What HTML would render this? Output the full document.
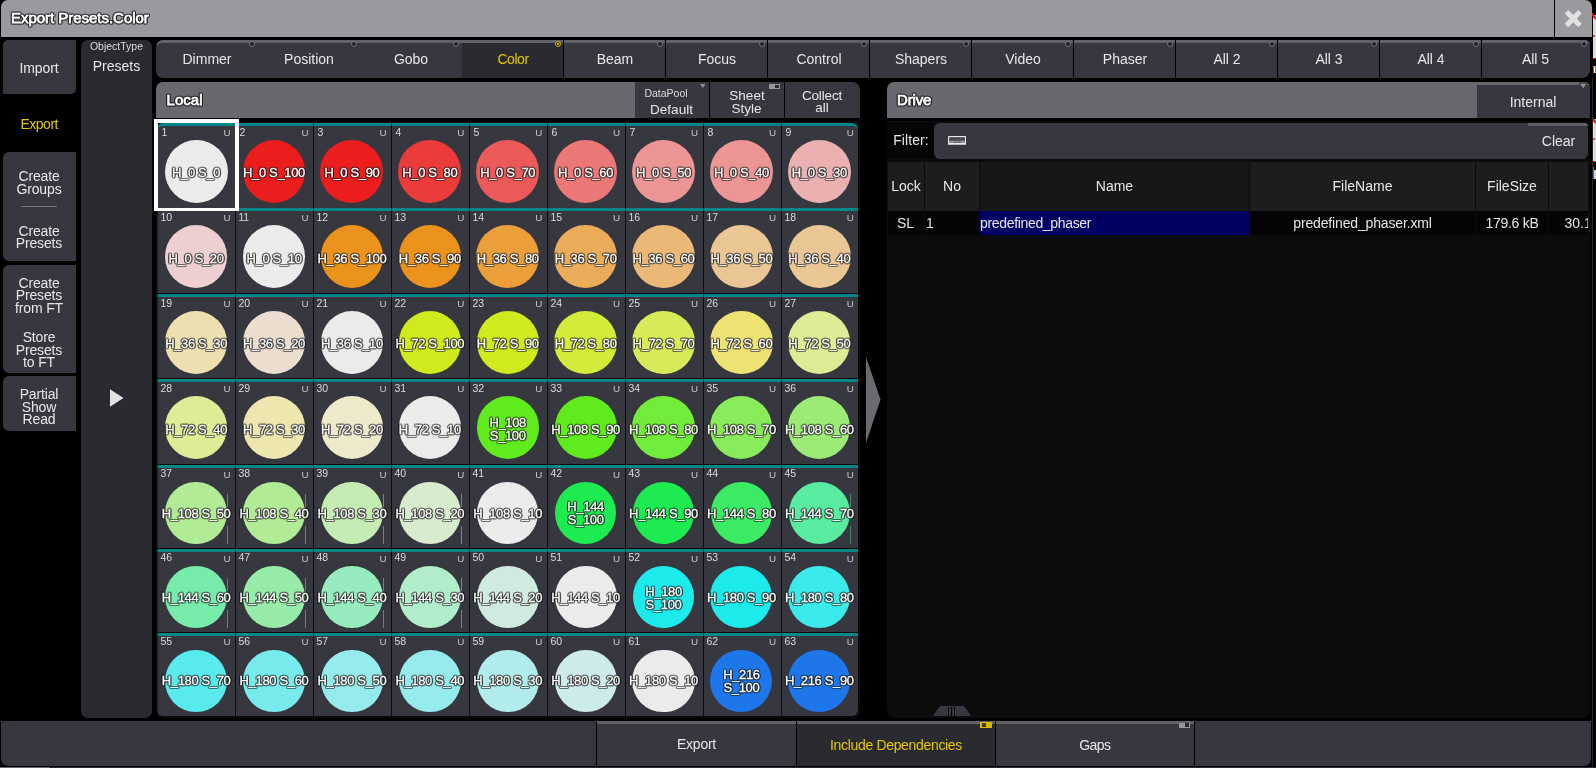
<!DOCTYPE html>
<html><head><meta charset="utf-8"><title>Export Presets.Color</title><style>
*{box-sizing:border-box;margin:0;padding:0}
html,body{width:1596px;height:768px;overflow:hidden;background:#000;}
body{font-family:"Liberation Sans", sans-serif;font-size:14px;color:#e8e8e8;position:relative;line-height:1}
#root{position:absolute;left:0;top:0;width:1596px;height:768px;overflow:hidden;opacity:0.999;will-change:transform}
.a{position:absolute}
.c{position:absolute;text-align:center;white-space:nowrap}
.ol{font-weight:normal !important;-webkit-text-stroke:0.75px #fff;filter:drop-shadow(1px 0 0 rgba(25,25,25,.7)) drop-shadow(-1px 0 0 rgba(25,25,25,.7)) drop-shadow(0 1px 0 rgba(25,25,25,.7)) drop-shadow(0 -1px 0 rgba(25,25,25,.7));}
.cell{position:absolute;background:#383840;overflow:hidden}
.circ{position:absolute;width:62.6px;height:62.6px;border-radius:50%}
.num{position:absolute;font-size:10.5px;color:#dcdcdc;left:5px;}
.u{position:absolute;font-size:9.8px;color:#c8c8c8;}
.lbl{position:absolute;left:-10px;right:-10px;text-align:center;font-size:13px;color:#fff;white-space:nowrap;letter-spacing:-0.35px;
 -webkit-text-stroke:0.32px #fff;filter:drop-shadow(1px 0 0 rgba(20,20,20,.58)) drop-shadow(-1px 0 0 rgba(20,20,20,.58)) drop-shadow(0 1px 0 rgba(20,20,20,.58)) drop-shadow(0 -1px 0 rgba(20,20,20,.58));}
.tab{position:absolute;top:40px;height:38px;background:#383840;border-top:3px solid #626369;text-align:center;line-height:33px;font-size:14px}
.dot{position:absolute;width:6px;height:6px;border-radius:50%;background:#222228;border:1px solid #77787e;top:41px}
.sb{position:absolute;left:3px;width:73px;background:#383840;text-align:center;font-size:14px;letter-spacing:-0.15px}
.sb div{position:absolute;left:-1px;right:0;text-align:center;line-height:12.5px}
</style></head><body><div id="root">
<div class="a" style="left:1593px;top:15px;width:3px;height:43px;background:#dedede;"></div>
<div class="a" style="left:1593px;top:58px;width:3px;height:1px;background:#e01818;"></div>
<div class="a" style="left:1593px;top:35px;width:2px;height:2px;background:#e01818;border-radius:1px"></div>
<div class="a" style="left:1593px;top:119px;width:3px;height:42px;background:#dedede;"></div>
<div class="a" style="left:1593px;top:161px;width:3px;height:1px;background:#e01818;"></div>
<div class="a" style="left:1593px;top:138px;width:2px;height:2px;background:#e01818;border-radius:1px"></div>
<svg class="a" style="left:1592px;top:12px" width="4" height="9"><path d="M0 1.5 L4 7" stroke="#e01818" stroke-width="2.2" fill="none"/></svg>
<svg class="a" style="left:1592px;top:116px" width="4" height="9"><path d="M0 1.5 L4 7" stroke="#e01818" stroke-width="2.2" fill="none"/></svg>
<div class="a" style="left:1593px;top:66px;width:1px;height:7px;background:#3a6ad0;"></div>
<div class="a" style="left:1594px;top:66px;width:1px;height:7px;background:#e8e8e8;"></div>
<div class="a" style="left:1595px;top:66px;width:1px;height:7px;background:#c06a20;"></div>
<div class="a" style="left:1593px;top:167px;width:1px;height:12px;background:#a06020;"></div>
<div class="a" style="left:1594px;top:170px;width:2px;height:9px;background:#c8d0e8;"></div>
<div class="a" style="left:1592px;top:78px;width:1px;height:690px;background:#262626;"></div>
<div class="a" style="left:1px;top:0px;width:1553px;height:37px;background:#9a9a9f;border-radius:7px 0 0 0"></div>
<div class="a" style="left:1555px;top:0px;width:37px;height:37px;background:#9a9a9f;border-radius:0 7px 0 0"></div>
<div class="a ol" style="left:11px;top:8px;font-size:15px;font-weight:bold;color:#fff;letter-spacing:-0.03px;line-height:20px;white-space:nowrap">Export Presets.Color</div>
<svg class="a" style="left:1563px;top:8px" width="22" height="22" viewBox="0 0 22 22"><path d="M1.7 5.4 L5.2 1.9 L10.2 6.9 L15.2 1.9 L18.7 5.4 L13.7 10.6 L18.7 15.8 L15.2 19.3 L10.2 14.3 L5.2 19.3 L1.7 15.8 L6.7 10.6 Z" fill="#e2e2e2"/></svg>
<div class="sb" style="top:40px;height:54px;border-radius:5px 0 5px 0"><div style="top:22px">Import</div></div>
<div class="c" style="left:-110.8px;width:300px;top:109.5px;height:28px;line-height:28px;font-size:14px;color:#e6c800;letter-spacing:-0.5px">Export</div>
<div class="sb" style="top:152px;height:109px;border-radius:6px 0 0 6px"><div style="top:18px">Create<br>Groups</div><div class="a" style="left:18px;top:54px;width:36px;height:1px;background:#77787e"></div><div style="top:72.5px">Create<br>Presets</div></div>
<div class="sb" style="top:265px;height:108px;border-radius:6px 0 0 6px"><div style="top:11.5px">Create<br>Presets<br>from FT</div><div style="top:66px">Store<br>Presets<br>to FT</div></div>
<div class="sb" style="top:376px;height:55px;border-radius:6px 0 0 6px"><div style="top:12px">Partial<br>Show<br>Read</div></div>
<div class="a" style="left:81px;top:40px;width:71px;height:678px;background:#2b2b32;border-radius:7px"></div>
<div class="c" style="left:-33.5px;width:300px;top:36.0px;height:21.0px;line-height:21.0px;font-size:10.5px;color:#dcdcdc;">ObjectType</div>
<div class="c" style="left:-33.5px;width:300px;top:51.5px;height:28px;line-height:28px;font-size:14px;color:#e8e8e8;">Presets</div>
<svg class="a" style="left:109px;top:388px" width="16" height="20"><path d="M1 1.3 L14.5 10 L1 18.7 Z" fill="#e4e4e4"/></svg>
<div class="a" style="left:156px;top:40px;width:1434px;height:38px;background:#383840;border-radius:7px 5px 8px 7px;border-top:3px solid #626369"></div>
<div class="c" style="left:57.0px;width:300px;top:44.5px;height:28px;line-height:28px;font-size:14px;color:#e8e8e8;">Dimmer</div>
<div class="dot" style="left:248.9px"></div>
<div class="c" style="left:159.0px;width:300px;top:44.5px;height:28px;line-height:28px;font-size:14px;color:#e8e8e8;">Position</div>
<div class="dot" style="left:350.9px"></div>
<div class="c" style="left:261.0px;width:300px;top:44.5px;height:28px;line-height:28px;font-size:14px;color:#e8e8e8;">Gobo</div>
<div class="dot" style="left:452.9px"></div>
<div class="a" style="left:462px;top:40px;width:101px;height:38px;background:#2b2b32;border-top:3px solid #626369"></div>
<div class="c" style="left:363.0px;width:300px;top:44.5px;height:28px;line-height:28px;font-size:14px;color:#e6c800;letter-spacing:-0.45px">Color</div>
<div class="a" style="left:563px;top:40px;width:1px;height:38px;background:#000;"></div>
<div class="dot" style="left:554.6px;top:40.8px;width:6.6px;height:6.6px;background:#3a3200;border:1.3px solid #c8ae00;"></div><div class="a" style="left:556.9px;top:43px;width:2.2px;height:2.2px;border-radius:50%;background:#e6c800"></div>
<div class="c" style="left:465.0px;width:300px;top:44.5px;height:28px;line-height:28px;font-size:14px;color:#e8e8e8;">Beam</div>
<div class="a" style="left:665px;top:40px;width:1px;height:38px;background:#000;"></div>
<div class="dot" style="left:656.9px"></div>
<div class="c" style="left:567.0px;width:300px;top:44.5px;height:28px;line-height:28px;font-size:14px;color:#e8e8e8;">Focus</div>
<div class="a" style="left:767px;top:40px;width:1px;height:38px;background:#000;"></div>
<div class="dot" style="left:758.9px"></div>
<div class="c" style="left:669.0px;width:300px;top:44.5px;height:28px;line-height:28px;font-size:14px;color:#e8e8e8;">Control</div>
<div class="a" style="left:869px;top:40px;width:1px;height:38px;background:#000;"></div>
<div class="dot" style="left:860.9px"></div>
<div class="c" style="left:771.0px;width:300px;top:44.5px;height:28px;line-height:28px;font-size:14px;color:#e8e8e8;">Shapers</div>
<div class="a" style="left:971px;top:40px;width:1px;height:38px;background:#000;"></div>
<div class="dot" style="left:962.9px"></div>
<div class="c" style="left:873.0px;width:300px;top:44.5px;height:28px;line-height:28px;font-size:14px;color:#e8e8e8;">Video</div>
<div class="a" style="left:1073px;top:40px;width:1px;height:38px;background:#000;"></div>
<div class="dot" style="left:1064.9px"></div>
<div class="c" style="left:975.0px;width:300px;top:44.5px;height:28px;line-height:28px;font-size:14px;color:#e8e8e8;">Phaser</div>
<div class="a" style="left:1175px;top:40px;width:1px;height:38px;background:#000;"></div>
<div class="dot" style="left:1166.9px"></div>
<div class="c" style="left:1077.0px;width:300px;top:44.5px;height:28px;line-height:28px;font-size:14px;color:#e8e8e8;">All 2</div>
<div class="a" style="left:1277px;top:40px;width:1px;height:38px;background:#000;"></div>
<div class="dot" style="left:1268.9px"></div>
<div class="c" style="left:1179.0px;width:300px;top:44.5px;height:28px;line-height:28px;font-size:14px;color:#e8e8e8;">All 3</div>
<div class="a" style="left:1379px;top:40px;width:1px;height:38px;background:#000;"></div>
<div class="dot" style="left:1370.9px"></div>
<div class="c" style="left:1281.0px;width:300px;top:44.5px;height:28px;line-height:28px;font-size:14px;color:#e8e8e8;">All 4</div>
<div class="a" style="left:1481px;top:40px;width:1px;height:38px;background:#000;"></div>
<div class="dot" style="left:1472.9px"></div>
<div class="c" style="left:1385.5px;width:300px;top:44.5px;height:28px;line-height:28px;font-size:14px;color:#e8e8e8;">All 5</div>
<div class="dot" style="left:1580.8px"></div>
<div class="a" style="left:156px;top:82px;width:479px;height:36px;background:#696a70;border-radius:7px 0 0 0"></div>
<div class="a ol" style="left:166.5px;top:90px;font-size:15px;font-weight:bold;color:#fff;letter-spacing:0.05px;line-height:20px">Local</div>
<div class="a" style="left:635px;top:82px;width:74px;height:36px;background:#383840;"></div>
<div class="a" style="left:710px;top:82px;width:74px;height:36px;background:#383840;"></div>
<div class="a" style="left:785px;top:82px;width:75px;height:36px;background:#383840;border-radius:0 8px 0 0"></div>
<div class="c" style="left:516.0px;width:300px;top:82.5px;height:21.0px;line-height:21.0px;font-size:10.5px;color:#dcdcdc;">DataPool</div>
<div class="c" style="left:521.5px;width:300px;top:95.5px;height:27.0px;line-height:27.0px;font-size:13.5px;color:#e8e8e8;">Default</div>
<svg class="a" style="left:698px;top:82px" width="11" height="9"><path d="M1.0 1.4 L8.4 1.4 L4.7 6.9 Z" fill="#8c8c92" stroke="#2e2e34" stroke-width="0.8"/></svg>
<div class="c" style="left:597.0px;width:300px;top:82.0px;height:27.0px;line-height:27.0px;font-size:13.5px;color:#e8e8e8;">Sheet</div>
<div class="c" style="left:596.5px;width:300px;top:94.5px;height:27.0px;line-height:27.0px;font-size:13.5px;color:#e8e8e8;">Style</div>
<div class="a" style="left:769px;top:84px;width:11px;height:5px;background:#98989c"><div class="a" style="left:6.3px;top:1.1px;width:3.7px;height:2.7px;background:#2a2a30"></div></div>
<div class="c" style="left:672.0px;width:300px;top:81.5px;height:27.0px;line-height:27.0px;font-size:13.5px;color:#e8e8e8;letter-spacing:-0.15px">Collect</div>
<div class="c" style="left:672.0px;width:300px;top:94.0px;height:27.0px;line-height:27.0px;font-size:13.5px;color:#e8e8e8;">all</div>
<div class="a" style="left:156px;top:121px;width:704px;height:597px;background:#0c0c0e;border-radius:0 0 6px 6px"></div>
<div class="cell" style="left:157px;top:123px;width:78px;height:85px;border-top:3px solid #008787;border-radius:6px 0 0 0;"><div class="circ" style="left:7.65px;top:13.70px;width:62.9px;height:63.4px;background:#ececec"></div><div class="num" style="top:-0.5px;left:4.5px;line-height:12px;letter-spacing:-0.2px">1</div><div class="u" style="left:66.6px;top:1.8px;line-height:10px">U</div><div class="lbl" style="top:39.1px;line-height:16px;left:-20.9px;right:auto;width:120px">H_0 S_0</div></div>
<div class="cell" style="left:236px;top:123px;width:77px;height:85px;border-top:3px solid #008787;"><div class="circ" style="left:6.55px;top:13.70px;width:62.9px;height:63.4px;background:#ec1e1e"></div><div class="num" style="top:-0.5px;left:3.5px;line-height:12px;letter-spacing:-0.2px">2</div><div class="u" style="left:65.5px;top:1.8px;line-height:10px">U</div><div class="lbl" style="top:39.1px;line-height:16px;left:-22.0px;right:auto;width:120px">H_0 S_100</div></div>
<div class="cell" style="left:314px;top:123px;width:77px;height:85px;border-top:3px solid #008787;"><div class="circ" style="left:6.45px;top:13.70px;width:62.9px;height:63.4px;background:#ec1e1e"></div><div class="num" style="top:-0.5px;left:3.5px;line-height:12px;letter-spacing:-0.2px">3</div><div class="u" style="left:65.4px;top:1.8px;line-height:10px">U</div><div class="lbl" style="top:39.1px;line-height:16px;left:-22.1px;right:auto;width:120px">H_0 S_90</div></div>
<div class="cell" style="left:392px;top:123px;width:77px;height:85px;border-top:3px solid #008787;"><div class="circ" style="left:6.35px;top:13.70px;width:62.9px;height:63.4px;background:#ec3c3c"></div><div class="num" style="top:-0.5px;left:3.5px;line-height:12px;letter-spacing:-0.2px">4</div><div class="u" style="left:65.3px;top:1.8px;line-height:10px">U</div><div class="lbl" style="top:39.1px;line-height:16px;left:-22.200000000000003px;right:auto;width:120px">H_0 S_80</div></div>
<div class="cell" style="left:470px;top:123px;width:77px;height:85px;border-top:3px solid #008787;"><div class="circ" style="left:6.25px;top:13.70px;width:62.9px;height:63.4px;background:#ec5a5a"></div><div class="num" style="top:-0.5px;left:3.5px;line-height:12px;letter-spacing:-0.2px">5</div><div class="u" style="left:65.2px;top:1.8px;line-height:10px">U</div><div class="lbl" style="top:39.1px;line-height:16px;left:-22.299999999999997px;right:auto;width:120px">H_0 S_70</div></div>
<div class="cell" style="left:548px;top:123px;width:77px;height:85px;border-top:3px solid #008787;"><div class="circ" style="left:6.15px;top:13.70px;width:62.9px;height:63.4px;background:#ec7878"></div><div class="num" style="top:-0.5px;left:3.5px;line-height:12px;letter-spacing:-0.2px">6</div><div class="u" style="left:65.1px;top:1.8px;line-height:10px">U</div><div class="lbl" style="top:39.1px;line-height:16px;left:-22.4px;right:auto;width:120px">H_0 S_60</div></div>
<div class="cell" style="left:626px;top:123px;width:77px;height:85px;border-top:3px solid #008787;"><div class="circ" style="left:6.05px;top:13.70px;width:62.9px;height:63.4px;background:#ec9696"></div><div class="num" style="top:-0.5px;left:3.5px;line-height:12px;letter-spacing:-0.2px">7</div><div class="u" style="left:65.0px;top:1.8px;line-height:10px">U</div><div class="lbl" style="top:39.1px;line-height:16px;left:-22.5px;right:auto;width:120px">H_0 S_50</div></div>
<div class="cell" style="left:704px;top:123px;width:77px;height:85px;border-top:3px solid #008787;"><div class="circ" style="left:5.95px;top:13.70px;width:62.9px;height:63.4px;background:#ec9696"></div><div class="num" style="top:-0.5px;left:3.5px;line-height:12px;letter-spacing:-0.2px">8</div><div class="u" style="left:64.9px;top:1.8px;line-height:10px">U</div><div class="lbl" style="top:39.1px;line-height:16px;left:-22.6px;right:auto;width:120px">H_0 S_40</div></div>
<div class="cell" style="left:782px;top:123px;width:76px;height:85px;border-top:3px solid #008787;border-radius:0 6px 0 0;"><div class="circ" style="left:5.85px;top:13.70px;width:62.9px;height:63.4px;background:#ecb2b2"></div><div class="num" style="top:-0.5px;left:3.5px;line-height:12px;letter-spacing:-0.2px">9</div><div class="u" style="left:64.8px;top:1.8px;line-height:10px">U</div><div class="lbl" style="top:39.1px;line-height:16px;left:-22.700000000000003px;right:auto;width:120px">H_0 S_30</div></div>
<div class="cell" style="left:157px;top:208px;width:78px;height:85px;border-top:3px solid #008787;"><div class="circ" style="left:7.85px;top:14.20px;width:62.5px;height:63px;background:#eed0d2"></div><div class="num" style="top:0.0px;left:3.5px;line-height:12px;letter-spacing:-0.2px">10</div><div class="u" style="left:66.6px;top:2.1px;line-height:10px">U</div><div class="lbl" style="top:39.5px;line-height:16px;left:-20.9px;right:auto;width:120px">H_0 S_20</div></div>
<div class="cell" style="left:236px;top:208px;width:77px;height:85px;border-top:3px solid #008787;"><div class="circ" style="left:6.75px;top:14.20px;width:62.5px;height:63px;background:#ececec"></div><div class="num" style="top:0.0px;left:2.5px;line-height:12px;letter-spacing:-0.2px">11</div><div class="u" style="left:65.5px;top:2.1px;line-height:10px">U</div><div class="lbl" style="top:39.5px;line-height:16px;left:-22.0px;right:auto;width:120px">H_0 S_10</div></div>
<div class="cell" style="left:314px;top:208px;width:77px;height:85px;border-top:3px solid #008787;"><div class="circ" style="left:6.65px;top:14.20px;width:62.5px;height:63px;background:#ec931e"></div><div class="num" style="top:0.0px;left:2.5px;line-height:12px;letter-spacing:-0.2px">12</div><div class="u" style="left:65.4px;top:2.1px;line-height:10px">U</div><div class="lbl" style="top:39.5px;line-height:16px;left:-22.1px;right:auto;width:120px">H_36 S_100</div></div>
<div class="cell" style="left:392px;top:208px;width:77px;height:85px;border-top:3px solid #008787;"><div class="circ" style="left:6.55px;top:14.20px;width:62.5px;height:63px;background:#ec931e"></div><div class="num" style="top:0.0px;left:2.5px;line-height:12px;letter-spacing:-0.2px">13</div><div class="u" style="left:65.3px;top:2.1px;line-height:10px">U</div><div class="lbl" style="top:39.5px;line-height:16px;left:-22.200000000000003px;right:auto;width:120px">H_36 S_90</div></div>
<div class="cell" style="left:470px;top:208px;width:77px;height:85px;border-top:3px solid #008787;"><div class="circ" style="left:6.45px;top:14.20px;width:62.5px;height:63px;background:#eca03c"></div><div class="num" style="top:0.0px;left:2.5px;line-height:12px;letter-spacing:-0.2px">14</div><div class="u" style="left:65.2px;top:2.1px;line-height:10px">U</div><div class="lbl" style="top:39.5px;line-height:16px;left:-22.299999999999997px;right:auto;width:120px">H_36 S_80</div></div>
<div class="cell" style="left:548px;top:208px;width:77px;height:85px;border-top:3px solid #008787;"><div class="circ" style="left:6.35px;top:14.20px;width:62.5px;height:63px;background:#ecad5a"></div><div class="num" style="top:0.0px;left:2.5px;line-height:12px;letter-spacing:-0.2px">15</div><div class="u" style="left:65.1px;top:2.1px;line-height:10px">U</div><div class="lbl" style="top:39.5px;line-height:16px;left:-22.4px;right:auto;width:120px">H_36 S_70</div></div>
<div class="cell" style="left:626px;top:208px;width:77px;height:85px;border-top:3px solid #008787;"><div class="circ" style="left:6.25px;top:14.20px;width:62.5px;height:63px;background:#ecba78"></div><div class="num" style="top:0.0px;left:2.5px;line-height:12px;letter-spacing:-0.2px">16</div><div class="u" style="left:65.0px;top:2.1px;line-height:10px">U</div><div class="lbl" style="top:39.5px;line-height:16px;left:-22.5px;right:auto;width:120px">H_36 S_60</div></div>
<div class="cell" style="left:704px;top:208px;width:77px;height:85px;border-top:3px solid #008787;"><div class="circ" style="left:6.15px;top:14.20px;width:62.5px;height:63px;background:#ecc796"></div><div class="num" style="top:0.0px;left:2.5px;line-height:12px;letter-spacing:-0.2px">17</div><div class="u" style="left:64.9px;top:2.1px;line-height:10px">U</div><div class="lbl" style="top:39.5px;line-height:16px;left:-22.6px;right:auto;width:120px">H_36 S_50</div></div>
<div class="cell" style="left:782px;top:208px;width:76px;height:85px;border-top:3px solid #008787;"><div class="circ" style="left:6.05px;top:14.20px;width:62.5px;height:63px;background:#ecc796"></div><div class="num" style="top:0.0px;left:2.5px;line-height:12px;letter-spacing:-0.2px">18</div><div class="u" style="left:64.8px;top:2.1px;line-height:10px">U</div><div class="lbl" style="top:39.5px;line-height:16px;left:-22.700000000000003px;right:auto;width:120px">H_36 S_40</div></div>
<div class="cell" style="left:157px;top:294px;width:78px;height:84px;border-top:3px solid #008787;"><div class="circ" style="left:7.95px;top:14.00px;width:62.3px;height:62.8px;background:#eee0b0"></div><div class="num" style="top:0.0px;left:3.5px;line-height:12px;letter-spacing:-0.2px">19</div><div class="u" style="left:66.6px;top:2.1px;line-height:10px">U</div><div class="lbl" style="top:38.9px;line-height:16px;left:-20.9px;right:auto;width:120px">H_36 S_30</div></div>
<div class="cell" style="left:236px;top:294px;width:77px;height:84px;border-top:3px solid #008787;"><div class="circ" style="left:6.85px;top:14.00px;width:62.3px;height:62.8px;background:#eddfd0"></div><div class="num" style="top:0.0px;left:2.5px;line-height:12px;letter-spacing:-0.2px">20</div><div class="u" style="left:65.5px;top:2.1px;line-height:10px">U</div><div class="lbl" style="top:38.9px;line-height:16px;left:-22.0px;right:auto;width:120px">H_36 S_20</div></div>
<div class="cell" style="left:314px;top:294px;width:77px;height:84px;border-top:3px solid #008787;"><div class="circ" style="left:6.75px;top:14.00px;width:62.3px;height:62.8px;background:#ececec"></div><div class="num" style="top:0.0px;left:2.5px;line-height:12px;letter-spacing:-0.2px">21</div><div class="u" style="left:65.4px;top:2.1px;line-height:10px">U</div><div class="lbl" style="top:38.9px;line-height:16px;left:-22.1px;right:auto;width:120px">H_36 S_10</div></div>
<div class="cell" style="left:392px;top:294px;width:77px;height:84px;border-top:3px solid #008787;"><div class="circ" style="left:6.65px;top:14.00px;width:62.3px;height:62.8px;background:#d0ec1e"></div><div class="num" style="top:0.0px;left:2.5px;line-height:12px;letter-spacing:-0.2px">22</div><div class="u" style="left:65.3px;top:2.1px;line-height:10px">U</div><div class="lbl" style="top:38.9px;line-height:16px;left:-22.200000000000003px;right:auto;width:120px">H_72 S_100</div></div>
<div class="cell" style="left:470px;top:294px;width:77px;height:84px;border-top:3px solid #008787;"><div class="circ" style="left:6.55px;top:14.00px;width:62.3px;height:62.8px;background:#d0ec1e"></div><div class="num" style="top:0.0px;left:2.5px;line-height:12px;letter-spacing:-0.2px">23</div><div class="u" style="left:65.2px;top:2.1px;line-height:10px">U</div><div class="lbl" style="top:38.9px;line-height:16px;left:-22.299999999999997px;right:auto;width:120px">H_72 S_90</div></div>
<div class="cell" style="left:548px;top:294px;width:77px;height:84px;border-top:3px solid #008787;"><div class="circ" style="left:6.45px;top:14.00px;width:62.3px;height:62.8px;background:#d4ec3c"></div><div class="num" style="top:0.0px;left:2.5px;line-height:12px;letter-spacing:-0.2px">24</div><div class="u" style="left:65.1px;top:2.1px;line-height:10px">U</div><div class="lbl" style="top:38.9px;line-height:16px;left:-22.4px;right:auto;width:120px">H_72 S_80</div></div>
<div class="cell" style="left:626px;top:294px;width:77px;height:84px;border-top:3px solid #008787;"><div class="circ" style="left:6.35px;top:14.00px;width:62.3px;height:62.8px;background:#d8ec5a"></div><div class="num" style="top:0.0px;left:2.5px;line-height:12px;letter-spacing:-0.2px">25</div><div class="u" style="left:65.0px;top:2.1px;line-height:10px">U</div><div class="lbl" style="top:38.9px;line-height:16px;left:-22.5px;right:auto;width:120px">H_72 S_70</div></div>
<div class="cell" style="left:704px;top:294px;width:77px;height:84px;border-top:3px solid #008787;"><div class="circ" style="left:6.25px;top:14.00px;width:62.3px;height:62.8px;background:#eee474"></div><div class="num" style="top:0.0px;left:2.5px;line-height:12px;letter-spacing:-0.2px">26</div><div class="u" style="left:64.9px;top:2.1px;line-height:10px">U</div><div class="lbl" style="top:38.9px;line-height:16px;left:-22.6px;right:auto;width:120px">H_72 S_60</div></div>
<div class="cell" style="left:782px;top:294px;width:76px;height:84px;border-top:3px solid #008787;"><div class="circ" style="left:6.15px;top:14.00px;width:62.3px;height:62.8px;background:#e0ec96"></div><div class="num" style="top:0.0px;left:2.5px;line-height:12px;letter-spacing:-0.2px">27</div><div class="u" style="left:64.8px;top:2.1px;line-height:10px">U</div><div class="lbl" style="top:38.9px;line-height:16px;left:-22.700000000000003px;right:auto;width:120px">H_72 S_50</div></div>
<div class="cell" style="left:157px;top:379px;width:78px;height:85px;border-top:3px solid #008787;"><div class="circ" style="left:8.05px;top:14.40px;width:62.1px;height:62.6px;background:#e0ec96"></div><div class="num" style="top:0.0px;left:3.5px;line-height:12px;letter-spacing:-0.2px">28</div><div class="u" style="left:66.6px;top:2.1px;line-height:10px">U</div><div class="lbl" style="top:39.8px;line-height:16px;left:-20.9px;right:auto;width:120px">H_72 S_40</div></div>
<div class="cell" style="left:236px;top:379px;width:77px;height:85px;border-top:3px solid #008787;"><div class="circ" style="left:6.95px;top:14.40px;width:62.1px;height:62.6px;background:#eee8b0"></div><div class="num" style="top:0.0px;left:2.5px;line-height:12px;letter-spacing:-0.2px">29</div><div class="u" style="left:65.5px;top:2.1px;line-height:10px">U</div><div class="lbl" style="top:39.8px;line-height:16px;left:-22.0px;right:auto;width:120px">H_72 S_30</div></div>
<div class="cell" style="left:314px;top:379px;width:77px;height:85px;border-top:3px solid #008787;"><div class="circ" style="left:6.85px;top:14.40px;width:62.1px;height:62.6px;background:#eeeacc"></div><div class="num" style="top:0.0px;left:2.5px;line-height:12px;letter-spacing:-0.2px">30</div><div class="u" style="left:65.4px;top:2.1px;line-height:10px">U</div><div class="lbl" style="top:39.8px;line-height:16px;left:-22.1px;right:auto;width:120px">H_72 S_20</div></div>
<div class="cell" style="left:392px;top:379px;width:77px;height:85px;border-top:3px solid #008787;"><div class="circ" style="left:6.75px;top:14.40px;width:62.1px;height:62.6px;background:#ececec"></div><div class="num" style="top:0.0px;left:2.5px;line-height:12px;letter-spacing:-0.2px">31</div><div class="u" style="left:65.3px;top:2.1px;line-height:10px">U</div><div class="lbl" style="top:39.8px;line-height:16px;left:-22.200000000000003px;right:auto;width:120px">H_72 S_10</div></div>
<div class="cell" style="left:470px;top:379px;width:77px;height:85px;border-top:3px solid #008787;"><div class="circ" style="left:6.65px;top:14.40px;width:62.1px;height:62.6px;background:#60ec1e"></div><div class="num" style="top:0.0px;left:2.5px;line-height:12px;letter-spacing:-0.2px">32</div><div class="u" style="left:65.2px;top:2.1px;line-height:10px">U</div><div class="lbl" style="top:34.3px;line-height:13px;left:-22.299999999999997px;right:auto;width:120px">H_108<br>S_100</div></div>
<div class="cell" style="left:548px;top:379px;width:77px;height:85px;border-top:3px solid #008787;"><div class="circ" style="left:6.55px;top:14.40px;width:62.1px;height:62.6px;background:#60ec1e"></div><div class="num" style="top:0.0px;left:2.5px;line-height:12px;letter-spacing:-0.2px">33</div><div class="u" style="left:65.1px;top:2.1px;line-height:10px">U</div><div class="lbl" style="top:39.8px;line-height:16px;left:-22.4px;right:auto;width:120px">H_108 S_90</div></div>
<div class="cell" style="left:626px;top:379px;width:77px;height:85px;border-top:3px solid #008787;"><div class="circ" style="left:6.45px;top:14.40px;width:62.1px;height:62.6px;background:#74ec3c"></div><div class="num" style="top:0.0px;left:2.5px;line-height:12px;letter-spacing:-0.2px">34</div><div class="u" style="left:65.0px;top:2.1px;line-height:10px">U</div><div class="lbl" style="top:39.8px;line-height:16px;left:-22.5px;right:auto;width:120px">H_108 S_80</div></div>
<div class="cell" style="left:704px;top:379px;width:77px;height:85px;border-top:3px solid #008787;"><div class="circ" style="left:6.35px;top:14.40px;width:62.1px;height:62.6px;background:#89ec5a"></div><div class="num" style="top:0.0px;left:2.5px;line-height:12px;letter-spacing:-0.2px">35</div><div class="u" style="left:64.9px;top:2.1px;line-height:10px">U</div><div class="lbl" style="top:39.8px;line-height:16px;left:-22.6px;right:auto;width:120px">H_108 S_70</div></div>
<div class="cell" style="left:782px;top:379px;width:76px;height:85px;border-top:3px solid #008787;"><div class="circ" style="left:6.25px;top:14.40px;width:62.1px;height:62.6px;background:#9dec78"></div><div class="num" style="top:0.0px;left:2.5px;line-height:12px;letter-spacing:-0.2px">36</div><div class="u" style="left:64.8px;top:2.1px;line-height:10px">U</div><div class="lbl" style="top:39.8px;line-height:16px;left:-22.700000000000003px;right:auto;width:120px">H_108 S_60</div></div>
<div class="cell" style="left:157px;top:465px;width:78px;height:83px;border-top:3px solid #008787;"><div class="circ" style="left:8.35px;top:13.50px;width:61.5px;height:62px;background:#b2ec96"></div><div class="num" style="top:-1.0px;left:3.5px;line-height:12px;letter-spacing:-0.2px">37</div><div class="u" style="left:66.6px;top:1.5px;line-height:10px">U</div><div class="a" style="left:70.1px;top:26px;width:1px;height:13px;background:#b2ec96;opacity:.45"></div><div class="a" style="left:70.1px;top:58px;width:1px;height:18px;background:#b2ec96;opacity:.45"></div><div class="lbl" style="top:37.6px;line-height:16px;left:-20.9px;right:auto;width:120px">H_108 S_50</div></div>
<div class="cell" style="left:236px;top:465px;width:77px;height:83px;border-top:3px solid #008787;"><div class="circ" style="left:7.25px;top:13.50px;width:61.5px;height:62px;background:#b2ec96"></div><div class="num" style="top:-1.0px;left:2.5px;line-height:12px;letter-spacing:-0.2px">38</div><div class="u" style="left:65.5px;top:1.5px;line-height:10px">U</div><div class="a" style="left:69.0px;top:26px;width:1px;height:13px;background:#b2ec96;opacity:.45"></div><div class="a" style="left:69.0px;top:58px;width:1px;height:18px;background:#b2ec96;opacity:.45"></div><div class="lbl" style="top:37.6px;line-height:16px;left:-22.0px;right:auto;width:120px">H_108 S_40</div></div>
<div class="cell" style="left:314px;top:465px;width:77px;height:83px;border-top:3px solid #008787;"><div class="circ" style="left:7.15px;top:13.50px;width:61.5px;height:62px;background:#c5ecb2"></div><div class="num" style="top:-1.0px;left:2.5px;line-height:12px;letter-spacing:-0.2px">39</div><div class="u" style="left:65.4px;top:1.5px;line-height:10px">U</div><div class="a" style="left:68.9px;top:26px;width:1px;height:13px;background:#c5ecb2;opacity:.45"></div><div class="a" style="left:68.9px;top:58px;width:1px;height:18px;background:#c5ecb2;opacity:.45"></div><div class="lbl" style="top:37.6px;line-height:16px;left:-22.1px;right:auto;width:120px">H_108 S_30</div></div>
<div class="cell" style="left:392px;top:465px;width:77px;height:83px;border-top:3px solid #008787;"><div class="circ" style="left:7.05px;top:13.50px;width:61.5px;height:62px;background:#d8eccf"></div><div class="num" style="top:-1.0px;left:2.5px;line-height:12px;letter-spacing:-0.2px">40</div><div class="u" style="left:65.3px;top:1.5px;line-height:10px">U</div><div class="a" style="left:68.8px;top:26px;width:1px;height:13px;background:#d8eccf;opacity:.45"></div><div class="a" style="left:68.8px;top:58px;width:1px;height:18px;background:#d8eccf;opacity:.45"></div><div class="lbl" style="top:37.6px;line-height:16px;left:-22.200000000000003px;right:auto;width:120px">H_108 S_20</div></div>
<div class="cell" style="left:470px;top:465px;width:77px;height:83px;border-top:3px solid #008787;"><div class="circ" style="left:6.95px;top:13.50px;width:61.5px;height:62px;background:#ececec"></div><div class="num" style="top:-1.0px;left:2.5px;line-height:12px;letter-spacing:-0.2px">41</div><div class="u" style="left:65.2px;top:1.5px;line-height:10px">U</div><div class="lbl" style="top:37.6px;line-height:16px;left:-22.299999999999997px;right:auto;width:120px">H_108 S_10</div></div>
<div class="cell" style="left:548px;top:465px;width:77px;height:83px;border-top:3px solid #008787;"><div class="circ" style="left:6.85px;top:13.50px;width:61.5px;height:62px;background:#1eec50"></div><div class="num" style="top:-1.0px;left:2.5px;line-height:12px;letter-spacing:-0.2px">42</div><div class="u" style="left:65.1px;top:1.5px;line-height:10px">U</div><div class="lbl" style="top:32.1px;line-height:13px;left:-22.4px;right:auto;width:120px">H_144<br>S_100</div></div>
<div class="cell" style="left:626px;top:465px;width:77px;height:83px;border-top:3px solid #008787;"><div class="circ" style="left:6.75px;top:13.50px;width:61.5px;height:62px;background:#1eec50"></div><div class="num" style="top:-1.0px;left:2.5px;line-height:12px;letter-spacing:-0.2px">43</div><div class="u" style="left:65.0px;top:1.5px;line-height:10px">U</div><div class="lbl" style="top:37.6px;line-height:16px;left:-22.5px;right:auto;width:120px">H_144 S_90</div></div>
<div class="cell" style="left:704px;top:465px;width:77px;height:83px;border-top:3px solid #008787;"><div class="circ" style="left:6.65px;top:13.50px;width:61.5px;height:62px;background:#3cec64"></div><div class="num" style="top:-1.0px;left:2.5px;line-height:12px;letter-spacing:-0.2px">44</div><div class="u" style="left:64.9px;top:1.5px;line-height:10px">U</div><div class="lbl" style="top:37.6px;line-height:16px;left:-22.6px;right:auto;width:120px">H_144 S_80</div></div>
<div class="cell" style="left:782px;top:465px;width:76px;height:83px;border-top:3px solid #008787;"><div class="circ" style="left:6.55px;top:13.50px;width:61.5px;height:62px;background:#5aeca0"></div><div class="num" style="top:-1.0px;left:2.5px;line-height:12px;letter-spacing:-0.2px">45</div><div class="u" style="left:64.8px;top:1.5px;line-height:10px">U</div><div class="a" style="left:68.3px;top:26px;width:1px;height:13px;background:#5aeca0;opacity:.45"></div><div class="a" style="left:68.3px;top:58px;width:1px;height:18px;background:#5aeca0;opacity:.45"></div><div class="lbl" style="top:37.6px;line-height:16px;left:-22.700000000000003px;right:auto;width:120px">H_144 S_70</div></div>
<div class="cell" style="left:157px;top:549px;width:78px;height:83px;border-top:3px solid #008787;"><div class="circ" style="left:8.15px;top:13.50px;width:61.9px;height:62.4px;background:#78ecaa"></div><div class="num" style="top:-1.0px;left:3.5px;line-height:12px;letter-spacing:-0.2px">46</div><div class="u" style="left:66.6px;top:1.5px;line-height:10px">U</div><div class="a" style="left:70.1px;top:26px;width:1px;height:13px;background:#78ecaa;opacity:.45"></div><div class="a" style="left:70.1px;top:58px;width:1px;height:18px;background:#78ecaa;opacity:.45"></div><div class="lbl" style="top:38.2px;line-height:16px;left:-20.9px;right:auto;width:120px">H_144 S_60</div></div>
<div class="cell" style="left:236px;top:549px;width:77px;height:83px;border-top:3px solid #008787;"><div class="circ" style="left:7.05px;top:13.50px;width:61.9px;height:62.4px;background:#96eca8"></div><div class="num" style="top:-1.0px;left:2.5px;line-height:12px;letter-spacing:-0.2px">47</div><div class="u" style="left:65.5px;top:1.5px;line-height:10px">U</div><div class="a" style="left:69.0px;top:26px;width:1px;height:13px;background:#96eca8;opacity:.45"></div><div class="a" style="left:69.0px;top:58px;width:1px;height:18px;background:#96eca8;opacity:.45"></div><div class="lbl" style="top:38.2px;line-height:16px;left:-22.0px;right:auto;width:120px">H_144 S_50</div></div>
<div class="cell" style="left:314px;top:549px;width:77px;height:83px;border-top:3px solid #008787;"><div class="circ" style="left:6.95px;top:13.50px;width:61.9px;height:62.4px;background:#96ecbe"></div><div class="num" style="top:-1.0px;left:2.5px;line-height:12px;letter-spacing:-0.2px">48</div><div class="u" style="left:65.4px;top:1.5px;line-height:10px">U</div><div class="a" style="left:68.9px;top:26px;width:1px;height:13px;background:#96ecbe;opacity:.45"></div><div class="a" style="left:68.9px;top:58px;width:1px;height:18px;background:#96ecbe;opacity:.45"></div><div class="lbl" style="top:38.2px;line-height:16px;left:-22.1px;right:auto;width:120px">H_144 S_40</div></div>
<div class="cell" style="left:392px;top:549px;width:77px;height:83px;border-top:3px solid #008787;"><div class="circ" style="left:6.85px;top:13.50px;width:61.9px;height:62.4px;background:#b2eecc"></div><div class="num" style="top:-1.0px;left:2.5px;line-height:12px;letter-spacing:-0.2px">49</div><div class="u" style="left:65.3px;top:1.5px;line-height:10px">U</div><div class="a" style="left:68.8px;top:26px;width:1px;height:13px;background:#b2eecc;opacity:.45"></div><div class="a" style="left:68.8px;top:58px;width:1px;height:18px;background:#b2eecc;opacity:.45"></div><div class="lbl" style="top:38.2px;line-height:16px;left:-22.200000000000003px;right:auto;width:120px">H_144 S_30</div></div>
<div class="cell" style="left:470px;top:549px;width:77px;height:83px;border-top:3px solid #008787;"><div class="circ" style="left:6.75px;top:13.50px;width:61.9px;height:62.4px;background:#d0ece0"></div><div class="num" style="top:-1.0px;left:2.5px;line-height:12px;letter-spacing:-0.2px">50</div><div class="u" style="left:65.2px;top:1.5px;line-height:10px">U</div><div class="lbl" style="top:38.2px;line-height:16px;left:-22.299999999999997px;right:auto;width:120px">H_144 S_20</div></div>
<div class="cell" style="left:548px;top:549px;width:77px;height:83px;border-top:3px solid #008787;"><div class="circ" style="left:6.65px;top:13.50px;width:61.9px;height:62.4px;background:#ececec"></div><div class="num" style="top:-1.0px;left:2.5px;line-height:12px;letter-spacing:-0.2px">51</div><div class="u" style="left:65.1px;top:1.5px;line-height:10px">U</div><div class="lbl" style="top:38.2px;line-height:16px;left:-22.4px;right:auto;width:120px">H_144 S_10</div></div>
<div class="cell" style="left:626px;top:549px;width:77px;height:83px;border-top:3px solid #008787;"><div class="circ" style="left:6.55px;top:13.50px;width:61.9px;height:62.4px;background:#1eecec"></div><div class="num" style="top:-1.0px;left:2.5px;line-height:12px;letter-spacing:-0.2px">52</div><div class="u" style="left:65.0px;top:1.5px;line-height:10px">U</div><div class="lbl" style="top:32.7px;line-height:13px;left:-22.5px;right:auto;width:120px">H_180<br>S_100</div></div>
<div class="cell" style="left:704px;top:549px;width:77px;height:83px;border-top:3px solid #008787;"><div class="circ" style="left:6.45px;top:13.50px;width:61.9px;height:62.4px;background:#1eecec"></div><div class="num" style="top:-1.0px;left:2.5px;line-height:12px;letter-spacing:-0.2px">53</div><div class="u" style="left:64.9px;top:1.5px;line-height:10px">U</div><div class="lbl" style="top:38.2px;line-height:16px;left:-22.6px;right:auto;width:120px">H_180 S_90</div></div>
<div class="cell" style="left:782px;top:549px;width:76px;height:83px;border-top:3px solid #008787;"><div class="circ" style="left:6.35px;top:13.50px;width:61.9px;height:62.4px;background:#3cecec"></div><div class="num" style="top:-1.0px;left:2.5px;line-height:12px;letter-spacing:-0.2px">54</div><div class="u" style="left:64.8px;top:1.5px;line-height:10px">U</div><div class="lbl" style="top:38.2px;line-height:16px;left:-22.700000000000003px;right:auto;width:120px">H_180 S_80</div></div>
<div class="cell" style="left:157px;top:633px;width:78px;height:83px;border-top:3px solid #008787;border-radius:0 0 0 6px;"><div class="circ" style="left:8.00px;top:13.70px;width:62.2px;height:62.7px;background:#5aecec"></div><div class="num" style="top:-1.5px;left:3.5px;line-height:12px;letter-spacing:-0.2px">55</div><div class="u" style="left:66.6px;top:1.2px;line-height:10px">U</div><div class="lbl" style="top:37.2px;line-height:16px;left:-20.9px;right:auto;width:120px">H_180 S_70</div></div>
<div class="cell" style="left:236px;top:633px;width:77px;height:83px;border-top:3px solid #008787;"><div class="circ" style="left:6.90px;top:13.70px;width:62.2px;height:62.7px;background:#78ecec"></div><div class="num" style="top:-1.5px;left:2.5px;line-height:12px;letter-spacing:-0.2px">56</div><div class="u" style="left:65.5px;top:1.2px;line-height:10px">U</div><div class="lbl" style="top:37.2px;line-height:16px;left:-22.0px;right:auto;width:120px">H_180 S_60</div></div>
<div class="cell" style="left:314px;top:633px;width:77px;height:83px;border-top:3px solid #008787;"><div class="circ" style="left:6.80px;top:13.70px;width:62.2px;height:62.7px;background:#96ecec"></div><div class="num" style="top:-1.5px;left:2.5px;line-height:12px;letter-spacing:-0.2px">57</div><div class="u" style="left:65.4px;top:1.2px;line-height:10px">U</div><div class="lbl" style="top:37.2px;line-height:16px;left:-22.1px;right:auto;width:120px">H_180 S_50</div></div>
<div class="cell" style="left:392px;top:633px;width:77px;height:83px;border-top:3px solid #008787;"><div class="circ" style="left:6.70px;top:13.70px;width:62.2px;height:62.7px;background:#96ecec"></div><div class="num" style="top:-1.5px;left:2.5px;line-height:12px;letter-spacing:-0.2px">58</div><div class="u" style="left:65.3px;top:1.2px;line-height:10px">U</div><div class="lbl" style="top:37.2px;line-height:16px;left:-22.200000000000003px;right:auto;width:120px">H_180 S_40</div></div>
<div class="cell" style="left:470px;top:633px;width:77px;height:83px;border-top:3px solid #008787;"><div class="circ" style="left:6.60px;top:13.70px;width:62.2px;height:62.7px;background:#b2ecec"></div><div class="num" style="top:-1.5px;left:2.5px;line-height:12px;letter-spacing:-0.2px">59</div><div class="u" style="left:65.2px;top:1.2px;line-height:10px">U</div><div class="lbl" style="top:37.2px;line-height:16px;left:-22.299999999999997px;right:auto;width:120px">H_180 S_30</div></div>
<div class="cell" style="left:548px;top:633px;width:77px;height:83px;border-top:3px solid #008787;"><div class="circ" style="left:6.50px;top:13.70px;width:62.2px;height:62.7px;background:#cfecec"></div><div class="num" style="top:-1.5px;left:2.5px;line-height:12px;letter-spacing:-0.2px">60</div><div class="u" style="left:65.1px;top:1.2px;line-height:10px">U</div><div class="lbl" style="top:37.2px;line-height:16px;left:-22.4px;right:auto;width:120px">H_180 S_20</div></div>
<div class="cell" style="left:626px;top:633px;width:77px;height:83px;border-top:3px solid #008787;"><div class="circ" style="left:6.40px;top:13.70px;width:62.2px;height:62.7px;background:#ececec"></div><div class="num" style="top:-1.5px;left:2.5px;line-height:12px;letter-spacing:-0.2px">61</div><div class="u" style="left:65.0px;top:1.2px;line-height:10px">U</div><div class="lbl" style="top:37.2px;line-height:16px;left:-22.5px;right:auto;width:120px">H_180 S_10</div></div>
<div class="cell" style="left:704px;top:633px;width:77px;height:83px;border-top:3px solid #008787;"><div class="circ" style="left:6.30px;top:13.70px;width:62.2px;height:62.7px;background:#1e78ec"></div><div class="num" style="top:-1.5px;left:2.5px;line-height:12px;letter-spacing:-0.2px">62</div><div class="u" style="left:64.9px;top:1.2px;line-height:10px">U</div><div class="lbl" style="top:31.7px;line-height:13px;left:-22.6px;right:auto;width:120px">H_216<br>S_100</div></div>
<div class="cell" style="left:782px;top:633px;width:76px;height:83px;border-top:3px solid #008787;border-radius:0 0 6px 0;"><div class="circ" style="left:6.20px;top:13.70px;width:62.2px;height:62.7px;background:#1e78ec"></div><div class="num" style="top:-1.5px;left:2.5px;line-height:12px;letter-spacing:-0.2px">63</div><div class="u" style="left:64.8px;top:1.2px;line-height:10px">U</div><div class="lbl" style="top:37.2px;line-height:16px;left:-22.700000000000003px;right:auto;width:120px">H_216 S_90</div></div>
<div class="a" style="left:157px;top:123px;width:1px;height:593px;background:rgba(0,0,0,0.5);"></div>
<div class="a" style="left:154px;top:119px;width:85px;height:92px;border:4px solid #fff;border-bottom-width:3px"></div>
<svg class="a" style="left:865px;top:356px" width="18" height="88"><path d="M1 1 L15.5 43.5 L1 87 Z" fill="#6b6c72"/></svg>
<div class="a" style="left:887px;top:82px;width:703px;height:36px;background:#696a70;border-radius:7px 5px 0 0;overflow:hidden"><div class="a" style="left:590px;top:3px;width:113px;height:33px;background:#383840"></div></div>
<div class="a ol" style="left:897px;top:90px;font-size:15px;font-weight:bold;color:#fff;letter-spacing:-0.15px;line-height:20px">Drive</div>
<div class="c" style="left:1383.0px;width:300px;top:87.5px;height:28px;line-height:28px;font-size:14px;color:#e8e8e8;">Internal</div>
<svg class="a" style="left:1578px;top:82px" width="11" height="9"><path d="M1.0 1.2 L9.4 1.2 L5.2 7.2 Z" fill="#8c8c92" stroke="#2e2e34" stroke-width="1"/></svg>
<div class="a" style="left:887px;top:121px;width:703px;height:597px;background:#0d0d0d;border-radius:0 0 7px 7px"></div>
<div class="a" style="left:887px;top:122px;width:47px;height:37px;background:#060606;"></div>
<div class="c" style="left:761.0px;width:300px;top:126px;height:28px;line-height:28px;font-size:14px;color:#e8e8e8;letter-spacing:0.1px">Filter:</div>
<div class="a" style="left:934px;top:123px;width:654px;height:36px;background:#383840;border-radius:6px 6px 6px 6px"></div>
<div class="a" style="left:1528px;top:123px;width:60px;height:3px;background:#606167;border-radius:0 6px 0 0"></div>
<div class="c" style="left:1408.5px;width:300px;top:126.5px;height:28px;line-height:28px;font-size:14px;color:#e8e8e8;">Clear</div>
<svg class="a" style="left:948px;top:136px" width="18" height="9" viewBox="0 0 18 9"><rect x="0" y="0" width="18" height="8.8" rx="0.6" fill="#ececec"/><rect x="1.1" y="1.2" width="15.8" height="3.7" fill="#34343c"/><rect x="1.1" y="5.5" width="15.8" height="1.2" fill="#34343c"/><path d="M1.6 2.1h15" stroke="#d8d8d8" stroke-width="0.6" stroke-dasharray="0.6 1.5"/><path d="M2.5 3.3h14" stroke="#d8d8d8" stroke-width="0.6" stroke-dasharray="0.6 1.5"/><path d="M1.6 4.4h15" stroke="#d8d8d8" stroke-width="0.5" stroke-dasharray="0.6 1.5"/><path d="M2.4 5.4v1.4M4.3 5.4v1.4M13.7 5.4v1.4M15.6 5.4v1.4" stroke="#ececec" stroke-width="0.6"/></svg>
<div class="a" style="left:888px;top:162px;width:36px;height:49px;background:#1e1e1e;"></div>
<div class="c" style="left:756.0px;width:300px;top:172px;height:28px;line-height:28px;font-size:14px;color:#e8e8e8;">Lock</div>
<div class="a" style="left:925px;top:162px;width:54px;height:49px;background:#1e1e1e;"></div>
<div class="c" style="left:802.0px;width:300px;top:172px;height:28px;line-height:28px;font-size:14px;color:#e8e8e8;">No</div>
<div class="a" style="left:980px;top:162px;width:269px;height:49px;background:#181818;"></div>
<div class="c" style="left:964.5px;width:300px;top:172px;height:28px;line-height:28px;font-size:14px;color:#e8e8e8;">Name</div>
<div class="a" style="left:1250px;top:162px;width:225px;height:49px;background:#1e1e1e;"></div>
<div class="c" style="left:1212.5px;width:300px;top:172px;height:28px;line-height:28px;font-size:14px;color:#e8e8e8;">FileName</div>
<div class="a" style="left:1476px;top:162px;width:72px;height:49px;background:#1e1e1e;"></div>
<div class="c" style="left:1362.0px;width:300px;top:172px;height:28px;line-height:28px;font-size:14px;color:#e8e8e8;">FileSize</div>
<div class="a" style="left:1549px;top:162px;width:39px;height:49px;background:#1e1e1e;"></div>
<div class="a" style="left:888px;top:211px;width:36px;height:24px;background:#050505;"></div>
<div class="a" style="left:925px;top:211px;width:54px;height:24px;background:#050505;"></div>
<div class="a" style="left:980px;top:211px;width:269px;height:24px;background:#000064;"></div>
<div class="a" style="left:1250px;top:211px;width:225px;height:24px;background:#050505;"></div>
<div class="a" style="left:1476px;top:211px;width:72px;height:24px;background:#050505;"></div>
<div class="a" style="left:1549px;top:211px;width:39px;height:24px;background:#050505;"></div>
<div class="c" style="left:755.5px;width:300px;top:209px;height:28px;line-height:28px;font-size:14px;color:#e8e8e8;">SL</div>
<div class="a" style="left:926px;top:213px;line-height:20px;font-size:14px">1</div>
<div class="a" style="left:980px;top:213px;line-height:20px;font-size:14px;letter-spacing:-0.33px">predefined_phaser</div>
<div class="c" style="left:1212.5px;width:300px;top:209px;height:28px;line-height:28px;font-size:14px;color:#e8e8e8;letter-spacing:-0.15px">predefined_phaser.xml</div>
<div class="c" style="left:1362.0px;width:300px;top:209px;height:28px;line-height:28px;font-size:14px;color:#e8e8e8;letter-spacing:-0.3px">179.6 kB</div>
<div class="a" style="left:1549px;top:211px;width:39px;height:24px;overflow:hidden"><div class="a" style="left:15.5px;top:2px;line-height:20px;font-size:14px">30.1</div></div>
<svg class="a" style="left:933px;top:706px" width="38" height="10"><path d="M0 10 L7 0 L31 0 L38 10 Z" fill="#383840"/><path d="M15.5 1v9M18.5 1v9M21.5 1v9" stroke="#000" stroke-width="1"/></svg>
<div class="a" style="left:1px;top:721px;width:1590px;height:45px;background:#383840;border-radius:0 0 7px 7px"></div>
<div class="a" style="left:596px;top:721px;width:1px;height:45px;background:#000;"></div>
<div class="a" style="left:597px;top:721px;width:199px;height:3px;background:#626369;"></div>
<div class="a" style="left:796px;top:721px;width:1px;height:45px;background:#000;"></div>
<div class="a" style="left:797px;top:721px;width:198px;height:45px;background:#2b2b32;"></div>
<div class="a" style="left:797px;top:721px;width:198px;height:3px;background:#626369;"></div>
<div class="a" style="left:995px;top:721px;width:1px;height:45px;background:#000;"></div>
<div class="a" style="left:996px;top:721px;width:198px;height:3px;background:#626369;"></div>
<div class="a" style="left:1194px;top:721px;width:1px;height:45px;background:#000;"></div>
<div class="c" style="left:546.5px;width:300px;top:730px;height:28px;line-height:28px;font-size:14px;color:#e8e8e8;letter-spacing:-0.25px">Export</div>
<div class="c" style="left:746.0px;width:300px;top:730.5px;height:28px;line-height:28px;font-size:14px;color:#e6c800;letter-spacing:-0.33px">Include Dependencies</div>
<div class="c" style="left:944.8px;width:300px;top:730.5px;height:28px;line-height:28px;font-size:14px;color:#e8e8e8;letter-spacing:-0.6px">Gaps</div>
<div class="a" style="left:980px;top:722.4px;width:12px;height:5.8px;background:#d8bc00"><div class="a" style="left:1.6px;top:0.8px;width:4px;height:3.8px;background:#4a4000"></div></div>
<div class="a" style="left:1179px;top:722.6px;width:11px;height:5.4px;background:#98989c"><div class="a" style="left:6.2px;top:0.5px;width:3.8px;height:3.7px;background:#2a2a30"></div></div>
<div class="a" style="left:0px;top:767px;width:50px;height:1px;background:#6b6b70;"></div>
<div class="a" style="left:51px;top:767px;width:1545px;height:1px;background:#2b2b32;"></div>
</div></body></html>
